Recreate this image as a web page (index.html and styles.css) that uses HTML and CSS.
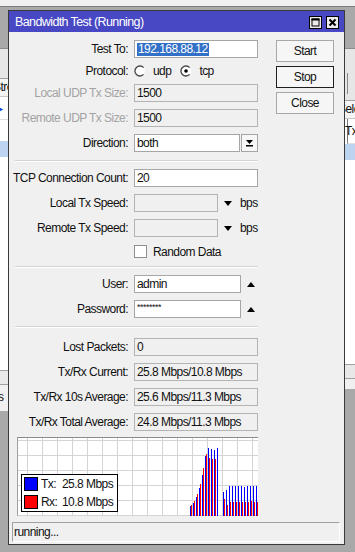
FILE: index.html
```html
<!DOCTYPE html>
<html lang="en">
<head>
    <meta charset="UTF-8">
    <meta name="viewport" content="width=device-width, initial-scale=1.0">
    <title>Bandwidth Test</title>
    <link rel="stylesheet" href="styles.css">
</head>
<body>
<div class="desktop">
    <div class="topbar"></div>

    <!-- windows behind -->
    <div class="bg-win bg-left">
        <div class="bg-toolbar"></div>
        <div class="bg-head">Stre</div>
        <div class="bg-row"><span class="bg-arrow">&#9658;</span></div>
        <div class="bg-gap"></div>
        <div class="bg-selected"></div>
        <div class="bg-fill"></div>
        <div class="bg-band"></div>
        <div class="bg-status">s</div>
    </div>

    <div class="bg-win bg-right">
        <div class="bg-toolbar tall"><span class="bg-split"></span></div>
        <div class="bg-head">Sele</div>
        <div class="bg-row cols">Tx</div>
        <div class="bg-selected"></div>
        <div class="bg-fill"></div>
        <div class="bg-band"></div>
        <div class="bg-light"></div>
    </div>

    <div class="window">
        <div class="titlebar">
            <span class="title">Bandwidth Test (Running)</span>
            <span class="tb-btn">
                <svg viewBox="0 0 11 11" width="11" height="11"><rect x="2" y="2" width="7" height="7" fill="none" stroke="#000"/><rect x="1.5" y="1.5" width="8" height="2" fill="#000"/></svg>
            </span>
            <span class="tb-btn">
                <svg viewBox="0 0 11 11" width="11" height="11"><path d="M2.5 2.5 L8.5 8.5 M8.5 2.5 L2.5 8.5" stroke="#000" stroke-width="2"/></svg>
            </span>
        </div>

        <div class="content">
            <div class="form">
                <div class="row">
                    <span class="label">Test To:</span>
                    <span class="field"><span class="sel">192.168.88.12</span></span>
                </div>
                <div class="row short">
                    <span class="label">Protocol:</span>
                    <svg class="radio" viewBox="0 0 12 12"><circle cx="6" cy="6" r="5" fill="#fff"/><path d="M9.6 2.6 A5 5 0 1 0 9.6 9.4" stroke="#444" stroke-width="1.3" fill="none"/></svg>
                    <span class="opt">udp</span>
                    <svg class="radio" viewBox="0 0 12 12"><circle cx="6" cy="6" r="5" fill="#fff"/><path d="M9.6 2.6 A5 5 0 1 0 9.6 9.4" stroke="#444" stroke-width="1.3" fill="none"/><circle cx="6" cy="6" r="1.8" fill="#000"/></svg>
                    <span class="opt">tcp</span>
                </div>
                <div class="row">
                    <span class="label disabled">Local UDP Tx Size:</span>
                    <span class="field off">1500</span>
                </div>
                <div class="row">
                    <span class="label disabled">Remote UDP Tx Size:</span>
                    <span class="field off">1500</span>
                </div>
                <div class="row">
                    <span class="label">Direction:</span>
                    <span class="field select">both</span>
                    <span class="drop">
                        <svg viewBox="0 0 9 8" width="9" height="8"><path d="M1 1 H8 L4.5 5 Z" fill="#000"/><rect x="1" y="6" width="7" height="1.5" fill="#000"/></svg>
                    </span>
                </div>

                <div class="sep"></div>

                <div class="row">
                    <span class="label">TCP Connection Count:</span>
                    <span class="field">20</span>
                </div>
                <div class="row">
                    <span class="label">Local Tx Speed:</span>
                    <span class="field off speed"></span>
                    <svg class="arrow" viewBox="0 0 8 5" width="8" height="5"><path d="M0 0 H8 L4 5 Z" fill="#000"/></svg>
                    <span class="unit">bps</span>
                </div>
                <div class="row">
                    <span class="label">Remote Tx Speed:</span>
                    <span class="field off speed"></span>
                    <svg class="arrow" viewBox="0 0 8 5" width="8" height="5"><path d="M0 0 H8 L4 5 Z" fill="#000"/></svg>
                    <span class="unit">bps</span>
                </div>
                <div class="row check">
                    <span class="label"></span>
                    <span class="checkbox"></span>
                    <span class="opt">Random Data</span>
                </div>

                <div class="sep"></div>

                <div class="row">
                    <span class="label">User:</span>
                    <span class="field user">admin</span>
                    <svg class="arrow" viewBox="0 0 8 5" width="8" height="5"><path d="M0 5 H8 L4 0 Z" fill="#000"/></svg>
                </div>
                <div class="row">
                    <span class="label">Password:</span>
                    <span class="field user"><span class="stars">********</span></span>
                    <svg class="arrow" viewBox="0 0 8 5" width="8" height="5"><path d="M0 5 H8 L4 0 Z" fill="#000"/></svg>
                </div>

                <div class="sep"></div>

                <div class="row spaced">
                    <span class="label">Lost Packets:</span>
                    <span class="field ro">0</span>
                </div>
                <div class="row">
                    <span class="label">Tx/Rx Current:</span>
                    <span class="field ro">25.8 Mbps/10.8 Mbps</span>
                </div>
                <div class="row">
                    <span class="label">Tx/Rx 10s Average:</span>
                    <span class="field ro">25.6 Mbps/11.3 Mbps</span>
                </div>
                <div class="row">
                    <span class="label">Tx/Rx Total Average:</span>
                    <span class="field ro">24.8 Mbps/11.3 Mbps</span>
                </div>

                <div class="graph">
                    <svg id="chart" width="240" height="78" viewBox="0 0 240 78" shape-rendering="crispEdges"></svg>
                    <div class="legend">
                        <div class="legend-row"><span class="swatch tx"></span><span class="lg-name">Tx:</span><span>25.8 Mbps</span></div>
                        <div class="legend-row"><span class="swatch rx"></span><span class="lg-name">Rx:</span><span>10.8 Mbps</span></div>
                    </div>
                </div>
            </div>

            <div class="actions">
                <button class="btn">Start</button>
                <button class="btn default">Stop</button>
                <button class="btn">Close</button>
            </div>
        </div>

        <div class="status">running...</div>
    </div>
</div>

<script>
    // Traffic graph
    const svg = document.getElementById('chart');
    const ns = 'http://www.w3.org/2000/svg';
    const add = (tag, attrs) => {
        const el = document.createElementNS(ns, tag);
        for (const k in attrs) el.setAttribute(k, attrs[k]);
        svg.appendChild(el);
    };

    for (let x = 9; x < 240; x += 15) add('rect', { x: x, y: 0, width: 1, height: 78, fill: '#d4d4d4' });
    for (let y = 2; y < 78; y += 15) add('rect', { x: 0, y: y, width: 240, height: 1, fill: '#d4d4d4' });

    const groups = [
        { start: 172, tx: [10, 13, 19, 28, 41, 60, 68, 67, 66, 68], rx: [11, 15, 22, 32, 48, 62, 58, 57, 57, 0] },
        { start: 205, tx: [24, 26, 30, 30, 30, 30, 30, 29, 30, 30, 30, 30], rx: [17, 11, 14, 14, 14, 14, 14, 14, 14, 15, 14, 14] }
    ];
    groups.forEach(g => {
        g.tx.forEach((h, i) => {
            const x = g.start + i * 3;
            add('rect', { x: x, y: 78 - h, width: 1, height: h, fill: '#0000ff' });
            if (g.rx[i]) add('rect', { x: x + 1, y: 78 - g.rx[i], width: 1, height: g.rx[i], fill: '#ff0000' });
        });
    });
</script>
</body>
</html>
```

FILE: styles.css
```css
body {
    margin: 0;
    font-family: "Liberation Sans", Arial, sans-serif;
    font-size: 12px;
    letter-spacing: -0.55px;
    color: #111;
    background: #a9a9a9;
}

.desktop {
    position: relative;
    width: 355px;
    height: 552px;
    overflow: hidden;
}

.topbar {
    height: 6px;
    background: #f0f0f0;
    border-bottom: 1px solid #7c7c7c;
}

/* background windows */
.bg-win {
    position: absolute;
    top: 48px;
    display: flex;
    flex-direction: column;
    background: #fff;
    overflow: hidden;
    white-space: nowrap;
    border-top: 1px solid #8c8c8c;
}

.bg-left {
    left: -70px;
    width: 78px;
    height: 362px;
}

.bg-right {
    left: 345px;
    width: 60px;
    height: 340px;
}

.bg-toolbar {
    height: 29px;
    background: #e6e6e6;
    border-bottom: 1px solid #a0a0a0;
    flex: none;
}

.bg-toolbar.tall {
    height: 51px;
    position: relative;
}

.bg-split {
    position: absolute;
    left: 2px;
    top: 24px;
    width: 1px;
    height: 21px;
    background: #888;
}

.bg-head {
    height: 17px;
    line-height: 17px;
    background: #f5f5f5;
    border-bottom: 1px solid #c8c8c8;
    padding-left: 63px;
    flex: none;
}

.bg-right .bg-head {
    padding-left: 0;
    text-indent: -7px;
}

.bg-row {
    height: 22px;
    line-height: 22px;
    border-bottom: 1px solid #e0e0e0;
    flex: none;
}

.bg-arrow {
    color: #1c3fd8;
    font-size: 9px;
    margin-left: 66px;
}

.bg-row.cols {
    height: 24px;
    line-height: 24px;
    border-left: 1px solid #777;
    margin-left: 2px;
    text-indent: -3px;
}

.bg-gap {
    height: 21px;
    flex: none;
}

.bg-selected {
    height: 16px;
    background: #bcd4f0;
    flex: none;
}

.bg-fill {
    flex: 1;
}

.bg-band {
    height: 13px;
    background: #e8e8e8;
    border-top: 1px solid #a0a0a0;
    flex: none;
}

.bg-status {
    height: 26px;
    line-height: 24px;
    background: #f0f0f0;
    border-top: 1px solid #a0a0a0;
    padding-left: 68px;
    flex: none;
}

.bg-light {
    height: 10px;
    background: #f0f0f0;
    border-top: 1px solid #a0a0a0;
    flex: none;
}

/* main window */
.window {
    position: absolute;
    left: 8px;
    top: 10px;
    width: 335px;
    background: #f0f0f0;
    border: 1px solid #3a3a3a;
}

.titlebar {
    height: 21px;
    display: flex;
    align-items: center;
    padding: 0 5px 0 6px;
    background: #4848c4;
    color: #fff;
}

.title {
    flex: 1;
    font-size: 12.5px;
    letter-spacing: -0.6px;
}

.tb-btn {
    width: 13px;
    height: 13px;
    box-sizing: border-box;
    margin: 2px 0 0 4px;
    display: flex;
    align-items: center;
    justify-content: center;
    background: #ececec;
    border: 1px solid #000;
}

.content {
    display: flex;
    padding: 8px 0 0 6px;
}

.form {
    width: 243px;
}

.row {
    display: flex;
    align-items: center;
    height: 18px;
    margin-top: 7px;
}

.row:first-child {
    margin-top: 0;
}

.row.short {
    height: 12px;
}

.row.check {
    height: 13px;
    margin-top: 8px;
}

.row.spaced {
    margin-top: 10px;
}

.label {
    width: 113px;
    flex: none;
    margin-right: 6px;
    display: flex;
    justify-content: flex-end;
    white-space: nowrap;
}

.label.disabled {
    color: #a3a3a3;
}

.field {
    box-sizing: border-box;
    width: 124px;
    height: 18px;
    flex: none;
    display: flex;
    align-items: center;
    padding: 0 2px;
    background: #fff;
    border: 1px solid #a6a6a6;
    white-space: nowrap;
}

.field.off,
.field.ro {
    background: #f0f0f0;
    border-color: #b4b4b4;
}

.field.select {
    width: 106px;
    margin-right: 1px;
}

.field.speed {
    width: 84px;
}

.field.user {
    width: 107px;
}

.sel {
    background: #3371c8;
    color: #fff;
    line-height: 13px;
    padding: 0 1px;
}

.stars {
    font-size: 9px;
    letter-spacing: -0.5px;
    margin-top: -4px;
}

.drop {
    box-sizing: border-box;
    width: 17px;
    height: 18px;
    display: flex;
    align-items: center;
    justify-content: center;
    background: #f7f7f7;
    border: 1px solid #a6a6a6;
}

.radio {
    width: 12px;
    height: 12px;
    flex: none;
}

.opt {
    margin: 0 9px 0 7px;
    white-space: nowrap;
}

.checkbox {
    box-sizing: border-box;
    width: 13px;
    height: 13px;
    flex: none;
    background: #fff;
    border: 1px solid #8e8e8e;
}

.checkbox + .opt {
    margin-left: 6px;
}

.arrow {
    margin-left: 6px;
    flex: none;
}

.unit {
    margin-left: 8px;
}

.sep {
    margin-top: 8px;
    border-top: 1px solid #d4d4d4;
    border-bottom: 1px solid #fff;
}

/* graph */
.graph {
    position: relative;
    box-sizing: border-box;
    width: 241px;
    height: 79px;
    margin: 6px 0 0 2px;
    background: #fff;
    border-top: 1px solid #8a8a8a;
    border-left: 1px solid #a0a0a0;
}

.graph svg {
    display: block;
}

.legend {
    position: absolute;
    left: 3px;
    top: 36px;
    box-sizing: border-box;
    width: 97px;
    height: 38px;
    padding: 2px 0 0 2px;
    background: #fff;
    border: 1px solid #000;
    white-space: nowrap;
}

.legend-row {
    display: flex;
    align-items: center;
    height: 14px;
    margin-bottom: 4px;
}

.swatch {
    box-sizing: border-box;
    width: 14px;
    height: 14px;
    flex: none;
    margin-right: 3px;
    border: 1px solid #000;
}

.swatch.tx {
    background: #0000ff;
}

.swatch.rx {
    background: #ff0000;
}

.lg-name {
    width: 21px;
    flex: none;
}

/* buttons */
.actions {
    width: 58px;
    margin-left: 18px;
    display: flex;
    flex-direction: column;
    gap: 4px;
}

.btn {
    box-sizing: border-box;
    height: 22px;
    padding: 0;
    font: inherit;
    letter-spacing: inherit;
    color: #111;
    background: #f6f6f6;
    border: 1px solid #a8a8a8;
}

.btn.default {
    border-color: #1e1e1e;
}

.status {
    box-sizing: border-box;
    height: 20px;
    margin: 6px 4px 2px 3px;
    padding-left: 1px;
    display: flex;
    align-items: center;
    border-top: 1px solid #a0a0a0;
    border-left: 1px solid #a0a0a0;
    border-right: 1px solid #fff;
    border-bottom: 1px solid #fff;
}
```
